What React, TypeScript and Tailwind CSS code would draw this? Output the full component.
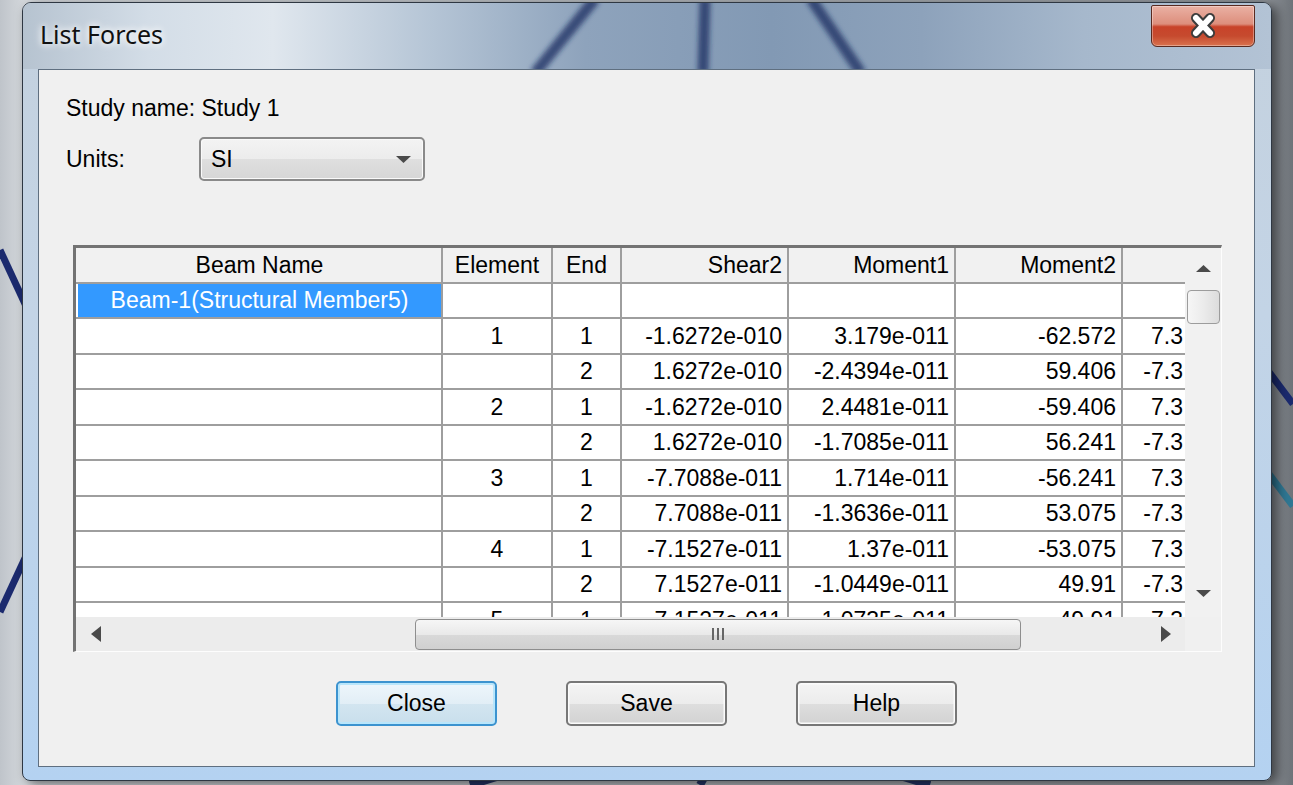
import React from "react";

type Row = { beam?: string; el: string; end: string; s2: string; m1: string; m2: string; x: string };

const rows: Row[] = [
  { beam: "Beam-1(Structural Member5)", el: "", end: "", s2: "", m1: "", m2: "", x: "" },
  { el: "1", end: "1", s2: "-1.6272e-010", m1: "3.179e-011", m2: "-62.572", x: "7.3" },
  { el: "", end: "2", s2: "1.6272e-010", m1: "-2.4394e-011", m2: "59.406", x: "-7.3" },
  { el: "2", end: "1", s2: "-1.6272e-010", m1: "2.4481e-011", m2: "-59.406", x: "7.3" },
  { el: "", end: "2", s2: "1.6272e-010", m1: "-1.7085e-011", m2: "56.241", x: "-7.3" },
  { el: "3", end: "1", s2: "-7.7088e-011", m1: "1.714e-011", m2: "-56.241", x: "7.3" },
  { el: "", end: "2", s2: "7.7088e-011", m1: "-1.3636e-011", m2: "53.075", x: "-7.3" },
  { el: "4", end: "1", s2: "-7.1527e-011", m1: "1.37e-011", m2: "-53.075", x: "7.3" },
  { el: "", end: "2", s2: "7.1527e-011", m1: "-1.0449e-011", m2: "49.91", x: "-7.3" },
  { el: "5", end: "1", s2: "-7.1527e-011", m1: "1.0735e-011", m2: "-49.91", x: "7.3" },
];

const cell = "h-full shrink-0 border-r-2 border-[#9e9e9e] flex items-center overflow-hidden whitespace-nowrap";
const rowCls = "flex h-[35.5px] shrink-0 border-b-2 border-[#9e9e9e] pl-[2px]";

const GridRow = ({ r, first }: { r: Row; first: boolean }) => (
  <div className={rowCls + " bg-white"}>
    <div className={cell + " w-[365px] justify-center " + (first ? "bg-[#3399ff] text-white" : "")}>{r.beam}</div>
    <div className={cell + " w-[110px] justify-center"}>{r.el}</div>
    <div className={cell + " w-[69px] justify-center"}>{r.end}</div>
    <div className={cell + " w-[167px] justify-end pr-[5px]"}>{r.s2}</div>
    <div className={cell + " w-[167px] justify-end pr-[5px]"}>{r.m1}</div>
    <div className={cell + " w-[167px] justify-end pr-[5px]"}>{r.m2}</div>
    <div className="h-full w-[62px] shrink-0 flex items-center justify-end pr-[2px] overflow-hidden whitespace-nowrap">{r.x}</div>
  </div>
);

const Tri = ({ dir }: { dir: "up" | "down" | "left" | "right" }) => {
  const pts = {
    up: "0,7 7.5,0 15,7",
    down: "0,0 15,0 7.5,7",
    left: "10,0 10,16 0,8",
    right: "0,0 10,8 0,16",
  }[dir];
  const vert = dir === "up" || dir === "down";
  return (
    <svg width={vert ? 15 : 10} height={vert ? 7 : 16} viewBox={vert ? "0 0 15 7" : "0 0 10 16"}>
      <polygon points={pts} fill="#4a4a4a" />
    </svg>
  );
};

const Btn = ({ label, focus }: { label: string; focus?: boolean }) => (
  <button
    className={
      "w-[161px] h-[45px] rounded-[5px] text-[23px] text-black flex items-center justify-center " +
      (focus
        ? "border-2 border-[#3c93cf] shadow-[inset_0_0_0_2px_#b9e6fb] bg-[linear-gradient(#eef6fb_0%,#e2eef6_50%,#d3e5f0_51%,#c9dfec_100%)]"
        : "border-2 border-[#777777] shadow-[inset_0_0_0_1.5px_#fbfbfb] bg-[linear-gradient(#f4f4f4_0%,#ececec_50%,#dedede_51%,#d2d2d2_100%)]")
    }
  >
    {label}
  </button>
);

export default function App() {
  return (
    <div className="relative w-[1293px] h-[785px] overflow-hidden bg-[linear-gradient(90deg,#bfc4ca_0%,#d6dade_2%,#8f949a_98%,#6e7379_100%)] font-['Liberation_Sans',Arial,sans-serif] text-black">
      <svg className="absolute inset-0" width="1293" height="785">
        <path d="M0 250 L26 306" stroke="#1b2a6e" strokeWidth="7" />
        <path d="M0 612 L26 556" stroke="#1b2a6e" strokeWidth="7" />
        <path d="M1266 368 L1293 404" stroke="#1b2a6e" strokeWidth="7" />
        <path d="M1266 470 L1293 506" stroke="#2f7793" strokeWidth="7" />
        <path d="M470 785 L500 776" stroke="#243566" strokeWidth="8" />
        <path d="M700 785 L705 776" stroke="#243566" strokeWidth="8" />
        <path d="M930 785 L900 776" stroke="#243566" strokeWidth="8" />
      </svg>

      <div className="relative pl-[22px] pt-[2px]">
        <div className="relative w-[1250px] h-[779px] rounded-t-[9px] rounded-b-[8px] border border-[#2e3742] bg-[linear-gradient(#c4d1de_0%,#c3d4e6_40%,#b4d2f1_100%)] shadow-[5px_3px_12px_rgba(0,0,0,0.55)] flex flex-col overflow-hidden">
          {/* title bar */}
          <div className="relative h-[66px] shrink-0 flex items-start bg-[linear-gradient(90deg,#b6c3d0_0%,#d3dde7_10%,#e0e7ee_20%,#b4c4d5_33%,#8ea3bc_45%,#8299b4_60%,#8da2bb_72%,#a6b8cc_85%,#b3c3d5_100%)]">
            <svg className="absolute inset-0" width="1248" height="66">
              <defs>
                <filter id="bl">
                  <feGaussianBlur stdDeviation="2.5" />
                </filter>
              </defs>
              <g filter="url(#bl)" stroke="#1e2f62" strokeOpacity="0.75" strokeWidth="11">
                <path d="M572 -4 L512 70" />
                <path d="M682 -4 L680 70" />
                <path d="M788 -4 L838 70" />
              </g>
            </svg>
            <div className="relative self-center pl-[17px] pb-[2px] font-['Noto_Sans',sans-serif] text-[25px] text-[#111] [text-shadow:0_0_10px_#fff,0_0_6px_#fff]">
              List Forces
            </div>
            <div className="relative ml-auto mr-[16px] mt-[2px] w-[104px] h-[42px] rounded-b-[6px] rounded-t-[2px] border border-[#5a2a20] bg-[linear-gradient(#eab1a4_0%,#dd8e7c_45%,#c8432a_52%,#c64a2e_75%,#d9724e_100%)] shadow-[inset_0_0_0_1px_rgba(255,255,255,0.35)] flex items-center justify-center">
              <svg width="32" height="26" viewBox="0 0 32 26">
                <path d="M9 5 L23 20 M23 5 L9 20" stroke="#3c3c3c" strokeWidth="10" strokeLinecap="round" />
                <path d="M9 5 L23 20 M23 5 L9 20" stroke="#ffffff" strokeWidth="6" strokeLinecap="round" />
              </svg>
            </div>
          </div>

          {/* client area */}
          <div className="ml-[15px] mr-[16px] h-[698px] border border-[#5f6f80] bg-[#f0f0f0] flex flex-col text-[23px]">
            <div className="pl-[27px] pt-[23px] h-[53px] leading-[30px]">Study name: Study 1</div>
            <div className="mt-[14px] pl-[27px] flex items-center h-[44px]">
              <div className="w-[133px]">Units:</div>
              <div className="w-[226px] h-[44px] rounded-[5px] border-2 border-[#8a8a8a] shadow-[inset_0_0_0_1px_#fafafa] bg-[linear-gradient(#f3f3f3_0%,#ececec_50%,#dfdfdf_51%,#d6d6d6_100%)] flex items-center pl-[10px] pr-[12px]">
                <span className="flex-1">SI</span>
                <Tri dir="down" />
              </div>
            </div>

            {/* table */}
            <div className="mt-[64px] ml-[34px] w-[1149px] h-[407px] border-t-[3px] border-l-[3px] border-[#737373] border-r border-b border-r-[#fdfdfd] border-b-[#fdfdfd] flex flex-col bg-white">
              <div className="flex h-[369px]">
                <div className="w-[1109px] h-full overflow-hidden flex flex-col">
                  <div className={rowCls + " bg-[#f1f1f1]"}>
                    <div className={cell + " w-[365px] justify-center"}>Beam Name</div>
                    <div className={cell + " w-[110px] justify-center"}>Element</div>
                    <div className={cell + " w-[69px] justify-center"}>End</div>
                    <div className={cell + " w-[167px] justify-end pr-[5px]"}>Shear2</div>
                    <div className={cell + " w-[167px] justify-end pr-[5px]"}>Moment1</div>
                    <div className={cell + " w-[167px] justify-end pr-[5px]"}>Moment2</div>
                    <div className="h-full w-[62px] shrink-0" />
                  </div>
                  {rows.map((r, i) => (
                    <GridRow key={i} r={r} first={i === 0} />
                  ))}
                </div>
                <div className="w-[36px] h-full bg-[#f1f1f1] flex flex-col items-center">
                  <div className="h-[40px] w-full flex items-center justify-center">
                    <Tri dir="up" />
                  </div>
                  <div className="w-[33px] h-[34px] mt-[2px] rounded-[4px] border border-[#9c9c9c] bg-[linear-gradient(90deg,#f6f6f6_0%,#ebebeb_50%,#dcdcdc_100%)]" />
                  <div className="flex-1" />
                  <div className="h-[46px] w-full flex items-center justify-center pb-[2px]">
                    <Tri dir="down" />
                  </div>
                </div>
              </div>
              <div className="flex flex-1">
                <div className="w-[1109px] h-full bg-[#ececec] flex items-center">
                  <div className="w-[39px] flex justify-center">
                    <Tri dir="left" />
                  </div>
                  <div className="w-[300px]" />
                  <div className="w-[606px] h-[31px] rounded-[4px] border border-[#8e8e8e] bg-[linear-gradient(#f6f6f6_0%,#e9e9e9_50%,#d9d9d9_51%,#d0d0d0_100%)] flex items-center justify-center gap-[3px]">
                    <span className="w-[2px] h-[12px] bg-[#666]" />
                    <span className="w-[2px] h-[12px] bg-[#666]" />
                    <span className="w-[2px] h-[12px] bg-[#666]" />
                  </div>
                  <div className="flex-1" />
                  <div className="w-[39px] flex justify-center">
                    <Tri dir="right" />
                  </div>
                </div>
                <div className="w-[36px] h-full bg-[#f0f0f0]" />
              </div>
            </div>

            <div className="mt-[29px] flex justify-center gap-[69px]">
              <Btn label="Close" focus />
              <Btn label="Save" />
              <Btn label="Help" />
            </div>
          </div>
        </div>
      </div>
    </div>
  );
}
